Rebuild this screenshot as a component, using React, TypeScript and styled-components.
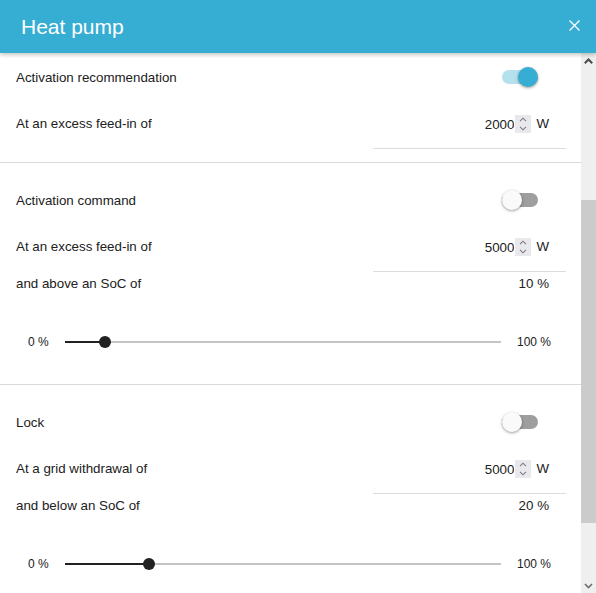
import { useLayoutEffect, useRef, useState } from "react";
import styled, { createGlobalStyle } from "styled-components";

const GlobalStyle = createGlobalStyle`
  html, body {
    margin: 0;
    padding: 0;
    height: 100%;
  }
  body {
    font-family: "Liberation Sans", Arial, sans-serif;
    font-size: 13.33px;
    color: #212121;
    background: #fff;
  }
  #root {
    height: 100%;
  }
`;

type SliderProps = { value: number };

const Slider = ({ value }: SliderProps) => (
  <SliderRow>
    <SliderLabel>0 %</SliderLabel>
    <Track>
      <Fill style={{ width: `calc(${value}% - 3px)` }} />
      <Thumb style={{ left: `calc(${value}% - 3px)` }} />
    </Track>
    <SliderLabel>100 %</SliderLabel>
  </SliderRow>
);

const Switch = ({ on, onToggle }: { on: boolean; onToggle: () => void }) => (
  <SwitchTrack $on={on} role="switch" aria-checked={on} onClick={onToggle}>
    <SwitchThumb $on={on} />
  </SwitchTrack>
);

const NumberField = ({ value, unit }: { value: number; unit: string }) => {
  const [current, setCurrent] = useState(value);
  return (
    <Field>
      <NumberInput
        type="number"
        value={current}
        onChange={(e) => setCurrent(Number(e.target.value))}
      />
      <Spinner>
        <SpinButton aria-label="Increase" onClick={() => setCurrent(current + 1)}>
          <svg width="8" height="5" viewBox="0 0 8 5">
            <path d="M1 4.2L4 1.2L7 4.2" fill="none" stroke="currentColor" strokeWidth="1.1" />
          </svg>
        </SpinButton>
        <SpinButton aria-label="Decrease" onClick={() => setCurrent(current - 1)}>
          <svg width="8" height="5" viewBox="0 0 8 5">
            <path d="M1 0.8L4 3.8L7 0.8" fill="none" stroke="currentColor" strokeWidth="1.1" />
          </svg>
        </SpinButton>
      </Spinner>
      <Unit>{unit}</Unit>
    </Field>
  );
};

export default function App() {
  const bodyRef = useRef<HTMLDivElement>(null);
  const firstRef = useRef<HTMLElement>(null);
  const trackRef = useRef<HTMLDivElement>(null);
  const [recommend, setRecommend] = useState(true);
  const [command, setCommand] = useState(false);
  const [lock, setLock] = useState(false);
  const [bar, setBar] = useState({ top: 0, height: 0 });

  const measure = () => {
    const body = bodyRef.current;
    const track = trackRef.current;
    if (!body || !track) return;
    const len = track.clientHeight;
    setBar({
      top: (len * body.scrollTop) / body.scrollHeight,
      height: (len * body.clientHeight) / body.scrollHeight,
    });
  };

  useLayoutEffect(() => {
    if (bodyRef.current && firstRef.current) {
      bodyRef.current.scrollTop = firstRef.current.offsetTop + 14;
    }
    measure();
  }, []);

  const step = (delta: number) => {
    if (bodyRef.current) bodyRef.current.scrollTop += delta;
  };

  return (
    <>
      <GlobalStyle />
      <Dialog>
        <Header>
          <Title>Heat pump</Title>
          <CloseButton aria-label="Close">
            <svg width="11" height="11" viewBox="0 0 11 11">
              <path d="M0.5 0.5L10.5 10.5M10.5 0.5L0.5 10.5" stroke="currentColor" strokeWidth="1.3" />
            </svg>
          </CloseButton>
        </Header>
        <Content>
          <Body ref={bodyRef} onScroll={measure}>
            <Intro>
              Configure when the heat pump is recommended, switched on or locked,
              depending on the excess feed-in, the grid withdrawal and the state of
              charge of the battery.
            </Intro>

            <Section ref={firstRef} $bottom={13}>
              <SwitchRow>
                <Label>Activation recommendation</Label>
                <Switch on={recommend} onToggle={() => setRecommend(!recommend)} />
              </SwitchRow>
              <FieldRow>
                <Label>At an excess feed-in of</Label>
                <NumberField value={2000} unit="W" />
              </FieldRow>
            </Section>

            <Section $bottom={22}>
              <SwitchRow>
                <Label>Activation command</Label>
                <Switch on={command} onToggle={() => setCommand(!command)} />
              </SwitchRow>
              <FieldRow>
                <Label>At an excess feed-in of</Label>
                <NumberField value={5000} unit="W" />
              </FieldRow>
              <SocRow>
                <Label>and above an SoC of</Label>
                <Label>10 %</Label>
              </SocRow>
              <Slider value={10} />
            </Section>

            <Section $bottom={22}>
              <SwitchRow>
                <Label>Lock</Label>
                <Switch on={lock} onToggle={() => setLock(!lock)} />
              </SwitchRow>
              <FieldRow>
                <Label>At a grid withdrawal of</Label>
                <NumberField value={5000} unit="W" />
              </FieldRow>
              <SocRow>
                <Label>and below an SoC of</Label>
                <Label>20 %</Label>
              </SocRow>
              <Slider value={20} />
            </Section>

            <Actions>
              <ActionButton>Cancel</ActionButton>
              <ActionButton $primary>Save</ActionButton>
            </Actions>
          </Body>

          <Rail>
            <RailButton aria-label="Scroll up" onClick={() => step(-40)}>
              <svg width="9" height="6" viewBox="0 0 9 6">
                <path d="M0.8 5.2L4.5 1.5L8.2 5.2" fill="none" stroke="#4a4a4a" strokeWidth="2" />
              </svg>
            </RailButton>
            <RailTrack ref={trackRef}>
              <RailThumb style={{ marginTop: bar.top, height: bar.height }} />
            </RailTrack>
            <RailButton aria-label="Scroll down" onClick={() => step(40)}>
              <svg width="9" height="6" viewBox="0 0 9 6">
                <path d="M1 1L4.5 4.5L8 1" fill="none" stroke="#6e6e6e" strokeWidth="1.6" />
              </svg>
            </RailButton>
          </Rail>
        </Content>
      </Dialog>
    </>
  );
}

const Dialog = styled.div`
  display: flex;
  flex-direction: column;
  height: 100vh;
`;

const Header = styled.header`
  position: relative;
  z-index: 1;
  flex: 0 0 53px;
  display: flex;
  align-items: center;
  justify-content: space-between;
  padding: 0 16px 0 21px;
  background: #36add2;
  color: #fff;
  box-shadow: 0 2px 4px rgba(0, 0, 0, 0.22);
`;

const Title = styled.h1`
  margin: 0;
  font-size: 21px;
  font-weight: 400;
`;

const CloseButton = styled.button`
  display: flex;
  margin-top: -3px;
  padding: 0;
  border: none;
  background: none;
  color: #fff;
  cursor: pointer;
`;

const Content = styled.div`
  flex: 1;
  display: flex;
  min-height: 0;
`;

const Body = styled.div`
  position: relative;
  flex: 1;
  overflow-y: scroll;
  scrollbar-width: none;

  &::-webkit-scrollbar {
    display: none;
  }
`;

const Rail = styled.div`
  flex: 0 0 15px;
  display: flex;
  flex-direction: column;
  background: #efefef;
`;

const RailButton = styled.button`
  flex: 0 0 15px;
  display: flex;
  align-items: center;
  justify-content: center;
  padding: 0;
  border: none;
  background: none;
  cursor: pointer;
`;

const RailTrack = styled.div`
  flex: 1;
  display: flex;
  flex-direction: column;
`;

const RailThumb = styled.div`
  background: #cbcbcb;
`;

const Intro = styled.p`
  box-sizing: border-box;
  height: 207px;
  margin: 0;
  padding: 24px 16px;
  line-height: 20px;
`;

const Section = styled.section<{ $bottom: number }>`
  padding: 21px 0 ${(p) => p.$bottom}px;
  border-top: 1px solid #dadada;
`;

const Label = styled.span`
  font-size: 13.33px;
`;

const SwitchRow = styled.div`
  display: flex;
  align-items: center;
  justify-content: space-between;
  height: 32px;
  padding: 0 15px 0 16px;
`;

const SwitchTrack = styled.button<{ $on: boolean }>`
  position: relative;
  width: 36px;
  height: 14px;
  margin-right: 28px;
  padding: 0;
  border: none;
  border-radius: 7px;
  background: ${(p) => (p.$on ? "#b5e0ee" : "#9e9e9e")};
  cursor: pointer;
`;

const SwitchThumb = styled.span<{ $on: boolean }>`
  position: absolute;
  top: 50%;
  left: ${(p) => (p.$on ? "16px" : "0")};
  width: 20px;
  height: 20px;
  margin-top: -10px;
  border-radius: 50%;
  background: ${(p) => (p.$on ? "#36add2" : "#fafafa")};
  box-shadow: 0 1px 3px rgba(0, 0, 0, 0.4);
`;

const FieldRow = styled.div`
  display: flex;
  align-items: flex-start;
  justify-content: space-between;
  margin-top: 15px;
  padding: 0 15px 0 16px;
  line-height: 32px;
`;

const Field = styled.div`
  display: flex;
  align-items: center;
  width: 176px;
  height: 32px;
  padding: 0 17px 8px 0;
  border-bottom: 1px solid #dcdcdc;
`;

const NumberInput = styled.input`
  flex: 1;
  min-width: 0;
  padding: 0;
  border: none;
  outline: none;
  background: transparent;
  font-family: "Liberation Sans", Arial, sans-serif;
  font-size: 13.33px;
  color: #212121;
  text-align: right;
  appearance: textfield;

  &::-webkit-inner-spin-button,
  &::-webkit-outer-spin-button {
    -webkit-appearance: none;
    margin: 0;
  }
`;

const Spinner = styled.div`
  display: flex;
  flex-direction: column;
  width: 16px;
  height: 18px;
  margin-left: 1px;
  background: #e9e9ed;
`;

const SpinButton = styled.button`
  flex: 1;
  display: flex;
  align-items: center;
  justify-content: center;
  padding: 0;
  border: none;
  background: none;
  color: #7a7a80;
  cursor: pointer;
`;

const Unit = styled.span`
  margin-left: 5px;
`;

const SocRow = styled.div`
  display: flex;
  align-items: center;
  justify-content: space-between;
  height: 23px;
  padding: 0 32px 0 16px;
`;

const SliderRow = styled.div`
  display: flex;
  align-items: center;
  gap: 16px;
  height: 40px;
  margin-top: 27px;
  padding: 0 30px 0 28px;
`;

const SliderLabel = styled.span`
  font-size: 12px;
`;

const Track = styled.div`
  position: relative;
  flex: 1;
  height: 2px;
  background: #c4c4c4;
`;

const Fill = styled.div`
  position: absolute;
  top: 0;
  left: 0;
  height: 100%;
  background: #212121;
`;

const Thumb = styled.div`
  position: absolute;
  top: 50%;
  width: 12px;
  height: 12px;
  border-radius: 50%;
  background: #212121;
  transform: translate(-50%, -50%);
`;

const Actions = styled.div`
  display: flex;
  justify-content: flex-end;
  gap: 8px;
  padding: 20px 15px 22px;
  border-top: 1px solid #dadada;
`;

const ActionButton = styled.button<{ $primary?: boolean }>`
  height: 36px;
  padding: 0 16px;
  border: none;
  border-radius: 2px;
  background: ${(p) => (p.$primary ? "#36add2" : "transparent")};
  color: ${(p) => (p.$primary ? "#fff" : "#36add2")};
  font-family: "Liberation Sans", Arial, sans-serif;
  font-size: 14px;
  text-transform: uppercase;
`;
